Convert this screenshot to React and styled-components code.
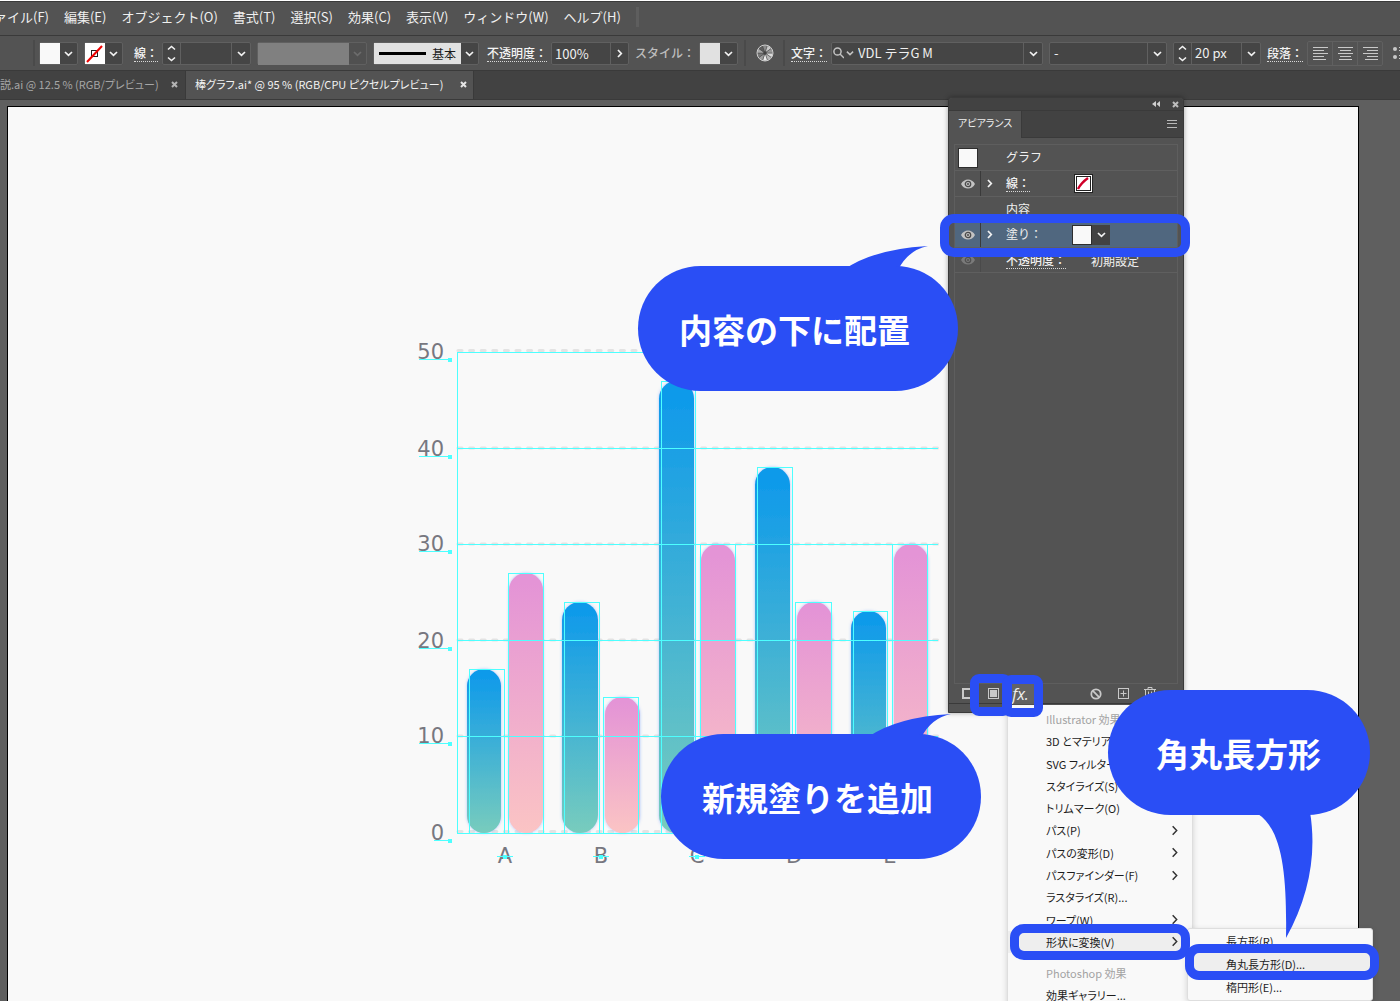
import React from "react";
import styled, { createGlobalStyle, css } from "styled-components";

const BLUE = "#2a4ef5";
const CYAN = "#4dffff";
const EDGE = "#3a3a3a";
const BASE = "#535353";
const DARK = "#424242";
const FIELD = "#454545";
const LINE = "#606060";
const PAPER = "#f9f9f9";

const Global = createGlobalStyle`
  * { box-sizing: border-box; }
  body {
    margin: 0;
    overflow: hidden;
    background: #5f5f5f;
    font-family: "Noto Sans CJK JP", "Noto Sans", sans-serif;
    font-size: 12px;
    color: #f0f0f0;
  }
  button, input, select { font: inherit; color: inherit; border: 0; padding: 0; margin: 0; border-radius: 0; }
  button { background: none; cursor: pointer; }
  ul { list-style: none; margin: 0; padding: 0; }
`;

const Window = styled.div`
  position: relative;
  height: 100vh;
  overflow: hidden;
  display: flex;
  flex-direction: column;
  border-top: 1px solid #fff;
  white-space: nowrap;
`;

/* ---------- menu bar ---------- */

const MenuBar = styled.nav`
  display: flex;
  align-items: center;
  gap: 15px;
  height: 35px;
  flex: none;
  margin-left: -19px;
  background: ${BASE};
  border-top: 1px solid ${EDGE};
  border-bottom: 1px solid ${EDGE};
  font-size: 13px;
  line-height: 20px;
  padding-bottom: 4px;
`;

const BarEnd = styled.span`
  width: 3px;
  height: 20px;
  background: #5e5e5e;
`;

/* ---------- control bar ---------- */

const ControlBar = styled.div`
  display: flex;
  align-items: center;
  gap: 6px;
  height: 35px;
  flex: none;
  padding-left: 33px;
  background: ${BASE};
  border-bottom: 1px solid ${EDGE};
`;

const Divider = styled.span`
  flex: none;
  width: 2px;
  height: 26px;
  background: #4a4a4a;
  margin-right: ${(p) => p.$after || 0}px;
`;

const Caption = styled.label`
  flex: none;
  margin: 0 -2px 0 ${(p) => p.$before || 0}px;
  height: 18px;
  line-height: 18px;
  font-weight: 500;
  color: ${(p) => (p.$dim ? "#bdbdbd" : "#f4f4f4")};
  border-bottom: 1px ${(p) => (p.$dim ? "solid transparent" : "dotted #d8d8d8")};
`;

const Box = styled.div`
  display: flex;
  flex: none;
  height: 23px;
  border: 1px solid ${LINE};
  border-radius: 2px;
  background: ${(p) => (p.$off ? "#505050" : FIELD)};
`;

const Cell = styled.button`
  display: flex;
  flex: none;
  flex-direction: column;
  align-items: center;
  justify-content: center;
  width: ${(p) => p.$w || 17}px;
  height: 21px;
`;

const Swatch = styled.button`
  width: 20px;
  height: 21px;
  background: ${(p) => p.$fill || PAPER};
  display: flex;
`;

const SelectWrap = styled.div`
  display: grid;
  grid-template-columns: 1fr 18px;
  width: ${(p) => p.$w}px;
  align-items: center;
  justify-items: center;

  & > select {
    grid-area: 1 / 1 / 2 / 3;
    appearance: none;
    background: transparent;
    width: 100%;
    height: 21px;
    padding-left: ${(p) => p.$indent || 4}px;
    font-size: 13px;
    line-height: 20px;
    outline: none;
  }
  & > svg { grid-area: 1 / 2; pointer-events: none; }
  border-left: ${(p) => (p.$split ? `1px solid ${LINE}` : "0")};
  background: linear-gradient(${LINE}, ${LINE}) calc(100% - 18px) 0 / 1px 100% no-repeat;
`;

const SearchWrap = styled.span`
  display: flex;
  align-items: center;
  gap: 2px;
  padding-left: 1px;
`;

const NumberField = styled.input`
  width: 59px;
  height: 21px;
  padding-left: 3px;
  background: transparent;
  font-size: 13px;
  outline: none;
  border-right: 1px solid ${LINE};
`;

const Variable = styled.div`
  width: 91px;
  height: 22px;
  background: #808080;
`;

const BrushButton = styled.button`
  display: flex;
  align-items: center;
  gap: 6px;
  width: 87px;
  height: 21px;
  padding-left: 5px;
  background: #e1e1e1;
  color: #1a1a1a;
`;

const BrushStroke = styled.span`
  width: 47px;
  height: 3px;
  background: #000;
`;

const AlignGroup = styled.div`
  display: flex;
  flex: none;
  height: 25px;
  border: 1px solid ${LINE};
  border-radius: 2px;
`;

const AlignButton = styled.button`
  display: grid;
  place-items: center;
  width: 24px;
  & + & { border-left: 1px solid ${LINE}; width: 25px; }
`;

/* ---------- document tabs ---------- */

const Tabs = styled.div`
  display: flex;
  flex: none;
  height: 29px;
  background: ${DARK};
  border-bottom: 1px solid ${EDGE};
`;

const DocTab = styled.div`
  display: flex;
  align-items: center;
  justify-content: space-between;
  width: ${(p) => p.$w}px;
  padding: 0 ${(p) => p.$end}px 2px ${(p) => p.$start}px;
  border-right: 1px solid ${EDGE};
  background: ${(p) => (p.$active ? BASE : DARK)};
  color: ${(p) => (p.$active ? "#f2f2f2" : "#a6a6a6")};
  font-size: 11px;
  line-height: 16px;
  font-feature-settings: "palt";
  overflow: hidden;
`;

const CloseButton = styled.button`
  display: grid;
  place-items: center;
  width: 8px;
  height: 8px;
`;

/* ---------- canvas ---------- */

const Canvas = styled.main`
  flex: 1;
  display: flex;
  padding: 6px 41px 0 7px;
  background: #5f5f5f;
`;

const Artboard = styled.section`
  position: relative;
  flex: 1;
  background: ${PAPER};
  border: 1px solid #000;
  border-bottom: 0;
`;

const ChartArt = styled.svg`
  position: absolute;
  left: 392px;
  top: 233px;
`;

/* ---------- appearance panel ---------- */

const Panel = styled.aside`
  position: absolute;
  left: 948px;
  top: 96px;
  width: 236px;
  height: 616px;
  display: flex;
  flex-direction: column;
  background: ${BASE};
  border: 1px solid ${EDGE};
  border-radius: 4px 4px 0 0;
  box-shadow: 0 0 5px rgba(0, 0, 0, 0.35);
`;

const PanelTop = styled.header`
  display: flex;
  justify-content: flex-end;
  align-items: center;
  gap: 10px;
  height: 12px;
  padding-right: 4px;
  background: ${DARK};
  border-radius: 4px 4px 0 0;
`;

const PanelTabs = styled.div`
  display: flex;
  justify-content: space-between;
  height: 28px;
  background: ${DARK};
  border-top: 1px solid ${EDGE};
`;

const PanelTab = styled.button`
  width: 73px;
  background: ${BASE};
  border-right: 1px solid ${EDGE};
  font-feature-settings: "palt";
  font-size: 10px;
  line-height: 16px;
  padding-bottom: 4px;
`;

const PanelMenu = styled.button`
  display: grid;
  align-items: center;
  justify-content: end;
  flex: 1;
  padding-right: 6px;
  border-bottom: 1px solid ${EDGE};
`;

const Layers = styled.ul`
  flex: 1;
  margin: 6px 5px 0;
  border: 1px solid #5e5e5e;
`;

const Layer = styled.li`
  display: grid;
  grid-template-columns: 26px 25px 66px 1fr;
  align-items: center;
  height: 26px;
  border-bottom: 1px solid #5f5f5f;
  background: ${(p) => (p.$selected ? "#50677f" : "transparent")};
  ${(p) => p.$short && css`height: 25px;`}
`;

const Eye = styled.button`
  display: grid;
  place-items: center;
  align-self: stretch;
  border-right: 1px solid ${EDGE};
  opacity: ${(p) => (p.$dim ? 0.35 : 1)};
`;

const Expand = styled.button`
  display: grid;
  justify-content: start;
  padding-left: 4px;
`;

const LayerName = styled.span`
  justify-self: start;
  line-height: 16px;
  font-weight: ${(p) => (p.$strong ? 500 : 400)};
  border-bottom: 1px ${(p) => (p.$strong ? "dotted #d8d8d8" : "solid transparent")};
`;

const Chip = styled.button`
  display: block;
  justify-self: center;
  width: 20px;
  height: 20px;
  background: ${PAPER};
  border: 1px solid #2d2d2d;
`;

const LayerValue = styled.span`
  display: flex;
  padding-left: ${(p) => p.$pad || 0}px;
`;

const DropCell = styled(Cell)`
  background: #424242;
  height: 20px;
  width: 18px;
`;

const PanelTools = styled.footer`
  display: flex;
  align-items: center;
  height: 20px;
  padding-left: 9px;
  border-bottom: 1px solid ${EDGE};
  margin-bottom: 8px;
`;

const Tool = styled.button`
  display: grid;
  place-items: center;
  width: ${(p) => p.$w || 27}px;
  height: 20px;
  background: ${(p) => (p.$on ? "#636363" : "transparent")};
  margin-right: ${(p) => p.$after || 0}px;
`;

const Fx = styled.span`
  font: italic 500 16px/18px "Open Sans", sans-serif;
`;

/* ---------- effect menus ---------- */

const Menu = styled.ul`
  position: absolute;
  left: ${(p) => p.$x}px;
  top: ${(p) => p.$y}px;
  width: ${(p) => p.$w}px;
  padding: ${(p) => (p.$attached ? "2px 0 0" : "0 0 2px")};
  background: ${PAPER};
  color: #1c1c1c;
  border: 1px solid #dedede;
  border-top-color: ${(p) => (p.$attached ? PAPER : "#dedede")};
  border-radius: ${(p) => (p.$attached ? 0 : 3)}px;
  box-shadow: 0 2px 6px rgba(0, 0, 0, 0.16);
  font-size: 11px;
  font-feature-settings: "palt";
`;

const MenuGroup = styled.ul`
  display: grid;
  grid-auto-rows: 1fr;
  height: ${(p) => p.$h}px;
  margin-bottom: ${(p) => p.$after || 0}px;
`;

const MenuItem = styled.button`
  display: flex;
  align-items: center;
  justify-content: space-between;
  width: 100%;
  height: 100%;
  padding: 0 12px 0 38px;
  background: ${(p) => (p.$on ? "#eeeeee" : "transparent")};
  color: ${(p) => (p.disabled ? "#a3a3a3" : "inherit")};
  line-height: 20px;
`;

/* ---------- annotations ---------- */

const Ring = styled.span`
  position: absolute;
  left: ${(p) => p.$x}px;
  top: ${(p) => p.$y}px;
  width: ${(p) => p.$w}px;
  height: ${(p) => p.$h}px;
  border: 9px solid ${BLUE};
  border-radius: ${(p) => p.$r || 14}px;
  pointer-events: none;
`;

const Bubble = styled.p`
  position: absolute;
  left: ${(p) => p.$x}px;
  top: ${(p) => p.$y}px;
  width: ${(p) => p.$w}px;
  height: 125px;
  margin: 0;
  padding-left: ${(p) => p.$inset}px;
  display: flex;
  align-items: center;
  border-radius: 63px;
  background: ${BLUE};
  color: #fff;
  font-size: 33px;
  line-height: 40px;
  font-weight: 700;
`;

const Tail = styled.svg`
  position: absolute;
  left: ${(p) => p.$x}px;
  top: ${(p) => p.$y}px;
  overflow: visible;
  fill: ${BLUE};
`;

/* ---------- icons ---------- */

const turns = { down: 0, right: -90 };

function Chevron({ dir = "down", color = "#f2f2f2", size = 9, weight = 1.7 }) {
  return (
    <svg width={size} height={size} viewBox="0 0 9 9" aria-hidden="true">
      <path d="M1 3l3.5 3.3L8 3" fill="none" stroke={color} strokeWidth={weight} transform={`rotate(${turns[dir]} 4.5 4.5)`} />
    </svg>
  );
}

function Arrows() {
  return (
    <svg width="9" height="17" viewBox="0 0 9 17" aria-hidden="true" fill="none" stroke="#f2f2f2" strokeWidth="1.6">
      <path d="M1 4.500l3.5-3L8 4.500M1 12.500l3.5 3L8 12.500" />
    </svg>
  );
}

function Cross({ color = "#e6e6e6" }) {
  return (
    <svg width="7" height="7" viewBox="0 0 7 7" aria-hidden="true">
      <path d="M1 1l5 5M6 1l-5 5" stroke={color} strokeWidth="2" />
    </svg>
  );
}

function EyeIcon() {
  return (
    <svg width="14" height="10" viewBox="0 0 14 10" aria-hidden="true">
      <path d="M0 5C3-1 11-1 14 5C11 11 3 11 0 5z" fill="#c3c3c3" />
      <circle cx="7" cy="5" r="2.7" fill="none" stroke="#4b4b4b" strokeWidth="1.3" />
      <circle cx="7" cy="5" r="1" fill="#4b4b4b" />
    </svg>
  );
}

function NoStroke() {
  return (
    <svg width="20" height="21" viewBox="0 0 20 21" aria-hidden="true">
      <rect width="20" height="21" fill="#fff" />
      <rect x="6.500" y="7.500" width="6" height="6" fill="none" stroke="#222" />
      <path d="M2 19L17 3" stroke="#f00000" strokeWidth="2" />
    </svg>
  );
}

function Wheel() {
  const tones = ["#dadada", "#b5b5b5", "#ececec", "#9c9c9c", "#777", "#a8a8a8", "#5d5d5d", "#8b8b8b", "#c9c9c9", "#989898"];
  return (
    <svg width="18" height="18" viewBox="-9 -9 18 18" aria-hidden="true">
      {tones.map((t, i) => {
        const a = (i * Math.PI) / 5;
        const b = a + Math.PI / 5;
        return <path key={i} fill={t} stroke="#4a4a4a" strokeWidth=".5" d={`M0 0L${8 * Math.cos(a)} ${8 * Math.sin(a)}A8 8 0 0 1 ${8 * Math.cos(b)} ${8 * Math.sin(b)}z`} />;
      })}
      <circle r="8" fill="none" stroke="#d0d0d0" />
      <circle r="1.7" fill="#444" />
    </svg>
  );
}

function AlignIcon({ side }) {
  return (
    <svg width="15" height="15" viewBox="0 0 15 15" aria-hidden="true" fill="#c9c9c9">
      {[15, 11, 15, 11, 13].map((w, i) => (
        <rect key={i} x={side === "left" ? 0 : side === "right" ? 15 - w : Math.floor((15 - w) / 2)} y={i * 3 + 1} width={w} height="1" />
      ))}
    </svg>
  );
}

/* ---------- chart ---------- */

const bars = [
  { x: 467, w: 34, top: 669, ox: 469, ow: 35 },
  { x: 509, w: 34, top: 573, ox: 508, ow: 35, pink: true },
  { x: 562, w: 36, top: 602, ox: 564, ow: 35 },
  { x: 605, w: 35, top: 697, ox: 603, ow: 35, pink: true },
  { x: 659, w: 35, top: 381, ox: 661, ow: 34 },
  { x: 701, w: 34, top: 544, ox: 700, ow: 35, pink: true },
  { x: 755, w: 35, top: 467, ox: 757, ow: 35 },
  { x: 797, w: 35, top: 602, ox: 795, ow: 36, pink: true },
  { x: 851, w: 35, top: 611, ox: 853, ow: 34 },
  { x: 894, w: 34, top: 544, ox: 892, ow: 35, pink: true },
];
const ticks = [[50, 352, 359], [40, 448, 456], [30, 544, 551], [20, 640, 648], [10, 736, 743], [0, 833, 840]];
const groups = [["A", 505], ["B", 601], ["C", 697], ["D", 794], ["E", 890]];

function Chart() {
  return (
    <ChartArt width="550" height="540" viewBox="400 340 550 540" role="img" aria-label="棒グラフ">
      <defs>
        <linearGradient id="sea" x1="0" y1="0" x2="0" y2="1">
          <stop offset="0.04" stopColor="#0f9aea" />
          <stop offset="1" stopColor="#78ccbd" />
        </linearGradient>
        <linearGradient id="rose" x1="0" y1="0" x2="0" y2="1">
          <stop offset="0.04" stopColor="#e494d6" />
          <stop offset="1" stopColor="#fbc4c4" />
        </linearGradient>
        <filter id="glow" x="-20%" y="-5%" width="140%" height="110%">
          <feDropShadow dx="0" dy="0" stdDeviation="1.6" floodColor="#5b8cff" floodOpacity="0.5" />
        </filter>
      </defs>
      {ticks.map(([v, y]) => (
        <path key={v} d={`M458 ${v === 50 || v === 0 ? y - 1.5 : y}H938`} stroke="#e3e3e3" strokeWidth="3" strokeLinecap="round" strokeDasharray="4 7.6" />
      ))}
      {bars.map((b) => (
        <rect key={b.x} x={b.x} y={b.top} width={b.w} height={833 - b.top} rx={b.w / 2} fill={b.pink ? "url(#rose)" : "url(#sea)"} filter="url(#glow)" />
      ))}
      <g fill="#777780" fontFamily="DejaVu Sans, sans-serif" fontSize="21">
        {ticks.map(([v, , base]) => (
          <text key={v} x="444" y={base} textAnchor="end">{v}</text>
        ))}
        {groups.map(([g, x]) => (
          <text key={g} x={x} y="863" textAnchor="middle">{g}</text>
        ))}
      </g>
      <g fill="none" stroke={CYAN} shapeRendering="crispEdges">
        {ticks.map(([v, y, base]) => (
          <React.Fragment key={v}>
            <path d={`M457 ${y + 0.5}H938M${v ? 419 : 434} ${base + 0.5}H448`} />
            <rect x="448" y={base - 1} width="4" height="4" fill={CYAN} stroke="none" />
          </React.Fragment>
        ))}
        <path d="M457.5 352V833" />
        {bars.map((b) => (
          <rect key={b.x} x={b.ox + 0.5} y={b.top + 0.5} width={b.ow} height={833 - b.top} />
        ))}
        {groups.slice(0, 3).map(([g, x]) => (
          <React.Fragment key={g}>
            <path d={`M${x - 8} 856.5H${x + 8}`} />
            <rect x={x - 2} y="855" width="4" height="4" fill={CYAN} stroke="none" />
          </React.Fragment>
        ))}
      </g>
    </ChartArt>
  );
}

/* ---------- page ---------- */

const menus = ["ファイル(F)", "編集(E)", "オブジェクト(O)", "書式(T)", "選択(S)", "効果(C)", "表示(V)", "ウィンドウ(W)", "ヘルプ(H)"];

const effects = [
  ["Illustrator 効果", "head"],
  ["3D とマテリアル"],
  ["SVG フィルター(G)"],
  ["スタイライズ(S)", "sub"],
  ["トリムマーク(O)"],
  ["パス(P)", "sub"],
  ["パスの変形(D)", "sub"],
  ["パスファインダー(F)", "sub"],
  ["ラスタライズ(R)..."],
  ["ワープ(W)", "sub"],
  ["形状に変換(V)", "sub", true],
];

function Item({ data: [label, kind, on] }) {
  return (
    <li>
      <MenuItem disabled={kind === "head"} $on={on}>
        {label}
        {kind === "sub" && <Chevron dir="right" color="#333" size={11} weight={1.2} />}
      </MenuItem>
    </li>
  );
}

function Picker({ id, label, w, indent, split, value = "" }) {
  return (
    <SelectWrap $w={w} $indent={indent} $split={split}>
      <select id={id} aria-label={label} defaultValue={value}>
        <option value={value}>{value}</option>
      </select>
      <Chevron />
    </SelectWrap>
  );
}

function Controls() {
  return (
    <ControlBar>
      <Divider $after={-2} />
      <Box>
        <Swatch aria-label="塗り" />
        <Cell aria-label="塗りの一覧"><Chevron /></Cell>
      </Box>
      <Box>
        <Swatch aria-label="線の色"><NoStroke /></Swatch>
        <Cell aria-label="線の色の一覧"><Chevron /></Cell>
      </Box>
      <Caption htmlFor="stroke" $before={5}>線：</Caption>
      <Box>
        <Cell aria-label="線幅の増減"><Arrows /></Cell>
        <Picker id="stroke" w={70} split />
      </Box>
      <Box $off>
        <Variable />
        <Cell disabled aria-label="可変線幅"><Chevron color="#6c6c6c" /></Cell>
      </Box>
      <Box>
        <BrushButton><BrushStroke />基本</BrushButton>
        <Cell aria-label="ブラシの一覧"><Chevron /></Cell>
      </Box>
      <Caption htmlFor="opacity" $before={2}>不透明度：</Caption>
      <Box>
        <NumberField id="opacity" defaultValue="100%" />
        <Cell aria-label="不透明度を調整"><Chevron dir="right" /></Cell>
      </Box>
      <Caption as="span" $dim>スタイル：</Caption>
      <Box>
        <Swatch $fill="#e1e1e1" aria-label="スタイル" />
        <Cell aria-label="スタイルの一覧"><Chevron /></Cell>
      </Box>
      <Divider />
      <Cell $w={25} aria-label="オブジェクトを再配色"><Wheel /></Cell>
      <Divider />
      <Caption htmlFor="font">文字：</Caption>
      <Box>
        <SearchWrap>
          <svg width="11" height="12" viewBox="0 0 11 12" fill="none" stroke="#c2c2c2" strokeWidth="1.5" aria-hidden="true">
            <circle cx="4.5" cy="4.5" r="3.6" />
            <path d="M7 7l4 4" />
          </svg>
          <Chevron color="#c2c2c2" size={8} />
        </SearchWrap>
        <Picker id="font" w={188} value="VDL テラG M" />
      </Box>
      <Box>
        <Picker label="フォントスタイル" w={116} value="-" />
      </Box>
      <Box>
        <Cell aria-label="文字サイズの増減"><Arrows /></Cell>
        <Picker label="文字サイズ" w={69} split indent={3} value="20 px" />
      </Box>
      <Caption as="span">段落：</Caption>
      <AlignGroup>
        <AlignButton aria-label="左揃え"><AlignIcon side="left" /></AlignButton>
        <AlignButton aria-label="中央揃え"><AlignIcon side="center" /></AlignButton>
        <AlignButton aria-label="右揃え"><AlignIcon side="right" /></AlignButton>
      </AlignGroup>
      <Cell $w={22} aria-label="箇条書き">
        <svg width="16" height="14" viewBox="0 0 16 14" fill="#c9c9c9" aria-hidden="true">
          <circle cx="3" cy="3" r="2" /><circle cx="3" cy="11" r="2" />
          <path d="M7 1h9v1H7zM7 4h9v1H7zM7 9h9v1H7zM7 12h9v1H7z" />
        </svg>
      </Cell>
    </ControlBar>
  );
}

function Appearance() {
  return (
    <Panel>
      <PanelTop>
        <svg width="9" height="6" viewBox="0 0 9 6" fill="#d0d0d0" aria-hidden="true"><path d="M4 0v6L0 3zM8 0v6L4.500 3z" /></svg>
        <CloseButton aria-label="閉じる"><Cross color="#bdbdbd" /></CloseButton>
      </PanelTop>
      <PanelTabs>
        <PanelTab>アピアランス</PanelTab>
        <PanelMenu aria-label="パネルメニュー">
          <svg width="10" height="8" viewBox="0 0 10 8" fill="#b9b9b9" aria-hidden="true"><path d="M0 0h10v1H0zM0 3h10v1H0zM0 7h10v1H0z" /></svg>
        </PanelMenu>
      </PanelTabs>
      <Layers>
        <Layer>
          <Chip aria-label="グラフのサムネール" /><span />
          <LayerName>グラフ</LayerName>
        </Layer>
        <Layer>
          <Eye aria-label="表示"><EyeIcon /></Eye>
          <Expand aria-label="展開"><Chevron dir="right" /></Expand>
          <LayerName $strong>線：</LayerName>
          <LayerValue $pad={2}>
            <svg width="19" height="19" viewBox="0 0 19 19" aria-hidden="true">
              <rect x=".5" y=".5" width="18" height="18" fill="#fff" stroke="#222" />
              <rect x="2.500" y="2.500" width="14" height="14" fill="#fff" stroke="#222" />
              <path d="M4 15Q7 9 14 4" stroke="#d0002a" strokeWidth="2.400" fill="none" />
            </svg>
          </LayerValue>
        </Layer>
        <Layer $short>
          <span /><span />
          <LayerName>内容</LayerName>
        </Layer>
        <Layer $selected>
          <Eye aria-label="表示"><EyeIcon /></Eye>
          <Expand aria-label="展開"><Chevron dir="right" /></Expand>
          <LayerName>塗り：</LayerName>
          <LayerValue>
            <Chip aria-label="塗りの色" />
            <DropCell aria-label="塗りの一覧"><Chevron /></DropCell>
          </LayerValue>
        </Layer>
        <Layer $short>
          <Eye $dim aria-label="表示"><EyeIcon /></Eye><span />
          <LayerName $strong>不透明度：</LayerName>
          <LayerValue $pad={19}>初期設定</LayerValue>
        </Layer>
      </Layers>
      <PanelTools>
        <Tool $w={18} $after={4} aria-label="新規線を追加">
          <svg width="11" height="11" viewBox="0 0 11 11" aria-hidden="true"><rect x="1" y="1" width="9" height="9" fill="none" stroke="#c9c9c9" strokeWidth="2" /></svg>
        </Tool>
        <Tool aria-label="新規塗りを追加">
          <svg width="11" height="11" viewBox="0 0 11 11" aria-hidden="true"><rect x=".5" y=".5" width="10" height="10" fill="none" stroke="#c9c9c9" /><rect x="2" y="2" width="7" height="7" fill="#c9c9c9" /></svg>
        </Tool>
        <Tool $on $after={48} aria-label="新規効果を追加"><Fx>fx.</Fx></Tool>
        <Tool $w={28} aria-label="アピアランスを消去">
          <svg width="12" height="12" viewBox="0 0 12 12" fill="none" stroke="#c9c9c9" strokeWidth="1.800" aria-hidden="true"><circle cx="6" cy="6" r="4.700" /><path d="M2.700 2.700l6.600 6.600" /></svg>
        </Tool>
        <Tool aria-label="項目を複製">
          <svg width="11" height="11" viewBox="0 0 11 11" fill="none" stroke="#c9c9c9" aria-hidden="true"><rect x=".5" y=".5" width="10" height="10" /><path d="M5.500 2.500v6M2.500 5.500h6" /></svg>
        </Tool>
        <Tool $w={25} aria-label="項目を削除">
          <svg width="12" height="13" viewBox="0 0 12 13" fill="none" stroke="#c9c9c9" aria-hidden="true"><path d="M0 2.500h12M4 2V.5h4V2M1.500 3v9.500h9V3M4.500 4.500v6M7.500 4.500v6" /></svg>
        </Tool>
      </PanelTools>
    </Panel>
  );
}

export default function App() {
  return (
    <>
      <Global />
      <Window>
        <MenuBar>
          {menus.map((m) => <button key={m}>{m}</button>)}
          <BarEnd />
        </MenuBar>
        <Controls />
        <Tabs>
          <DocTab $w={186} $start={0} $end={7}>
            <span>説.ai @ 12.5 % (RGB/プレビュー)</span>
            <CloseButton aria-label="閉じる"><Cross color="#b5b5b5" /></CloseButton>
          </DocTab>
          <DocTab $w={288} $start={9} $end={6} $active>
            <span>棒グラフ.ai* @ 95 % (RGB/CPU ピクセルプレビュー)</span>
            <CloseButton aria-label="閉じる"><Cross /></CloseButton>
          </DocTab>
        </Tabs>
        <Canvas>
          <Artboard><Chart /></Artboard>
        </Canvas>

        <Appearance />
        <Menu $x={1007} $y={704} $w={186} $attached>
          <li>
            <MenuGroup $h={245} $after={9}>
              {effects.map((e) => <Item key={e[0]} data={e} />)}
            </MenuGroup>
          </li>
          <li>
            <MenuGroup $h={44}>
              <Item data={["Photoshop 効果", "head"]} />
              <Item data={["効果ギャラリー..."]} />
            </MenuGroup>
          </li>
        </Menu>
        <Menu $x={1187} $y={927} $w={186}>
          <li>
            <MenuGroup $h={69}>
              <Item data={["長方形(R)..."]} />
              <Item data={["角丸長方形(D)...", "", true]} />
              <Item data={["楕円形(E)..."]} />
            </MenuGroup>
          </li>
        </Menu>

        <Ring $x={940} $y={213} $w={250} $h={43} />
        <Ring $x={970} $y={673} $w={42} $h={42} $r={9} />
        <Ring $x={1002} $y={674} $w={41} $h={42} $r={9} />
        <Ring $x={1010} $y={923} $w={180} $h={36} />
        <Ring $x={1185} $y={943} $w={194} $h={36} />

        <Tail $x={845} $y={245} width="81" height="24" viewBox="0 0 81 24" aria-hidden="true">
          <path d="M0 23Q29 3 83 0Q63 4 53 24z" />
        </Tail>
        <Bubble $x={638} $y={265} $w={320} $inset={41}>内容の下に配置</Bubble>
        <Tail $x={868} $y={713} width="81" height="24" viewBox="0 0 81 24" aria-hidden="true">
          <path d="M0 23Q29 3 83 0Q63 4 53 24z" />
        </Tail>
        <Bubble $x={661} $y={733} $w={320} $inset={41}>新規塗りを追加</Bubble>
        <Tail $x={1258} $y={811} width="58" height="127" viewBox="0 0 58 127" aria-hidden="true">
          <path d="M0 2C25 18 29 66 28 126C51 85 59 42 52 0z" />
        </Tail>
        <Bubble $x={1108} $y={689} $w={262} $inset={48}>角丸長方形</Bubble>
      </Window>
    </>
  );
}
